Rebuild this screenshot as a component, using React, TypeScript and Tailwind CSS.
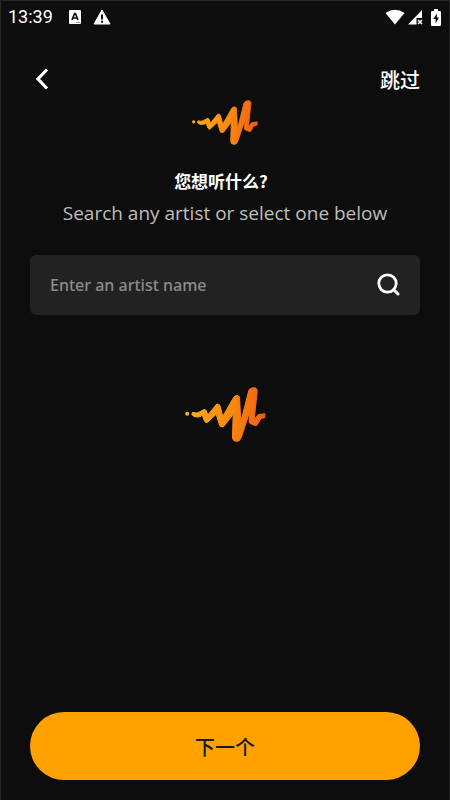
import React from 'react';

const Logo: React.FC<{ id: string; className: string }> = ({ id, className }) => (
  <svg viewBox="45 38 242 165" className={className} aria-hidden="true">
    <defs>
      <linearGradient id={id} x1="45" y1="120" x2="287" y2="140" gradientUnits="userSpaceOnUse">
        <stop offset="0" stopColor="#ffb01c" />
        <stop offset="0.55" stopColor="#fb8a10" />
        <stop offset="1" stopColor="#ee5d14" />
      </linearGradient>
    </defs>
    <circle cx="51" cy="118" r="6" fill={`url(#${id})`} />
    <path
      d="M67 114 Q78 119 90 112 L100 106 Q105 103 108 109 L113 122 L138 91 Q144 86 149 93 L158 126 L191 68 Q201 58 208 68 L212 142 L236 48 Q242 38 256 41 Q262 43 261 52 L252 136 L262 123 Q265 119 271 120 L284 118 L284 130 Q273 130 269 137 L262 151 Q257 156 251 152 L239 147 Q236 144 237 138 L238 114 L214 187 Q209 202 200 201 Q187 201 187 188 L189 120 L162 155 Q155 161 149 155 L138 120 L113 143 Q107 148 103 141 L97 123 Q89 129 80 128 Q67 127 65 120 Z"
      fill={`url(#${id})`}
      stroke={`url(#${id})`}
      strokeWidth="3"
      strokeLinejoin="round"
    />
  </svg>
);

const StatusBar: React.FC = () => (
  <div className="flex h-8 items-center justify-between pl-[7px] pr-2">
    <div className="flex items-center">
      <span className="font-['Roboto'] text-lg">13:39</span>
      <svg viewBox="0 0 12 14" className="ml-4 h-[14px] w-3" aria-hidden="true">
        <rect width="12" height="14" rx="1" fill="#fff" />
        <path d="M3 10 L5.6 3.5 H6.4 L9 10 M4 8 H8" fill="none" stroke="#0d0d0d" strokeWidth="1.6" />
        <path d="M7 12.5 H11" stroke="#999" />
      </svg>
      <svg viewBox="0 0 18 16" className="ml-3 h-4 w-[18px]" aria-hidden="true">
        <path d="M9 1 L17 15 H1 Z" fill="#fff" stroke="#fff" strokeLinejoin="round" />
        <path d="M9 5.5 V10.5 M9 11.8 V13.8" stroke="#0d0d0d" strokeWidth="2" />
      </svg>
    </div>
    <div className="flex items-center">
      <svg viewBox="0 0 20 16" className="h-4 w-5" aria-hidden="true">
        <path d="M0.5 4 Q10 -2.5 19.5 4 L10 15.5 Z" fill="#fff" />
      </svg>
      <svg viewBox="0 0 15 15" className="ml-[3px] h-[15px] w-[15px]" aria-hidden="true">
        <path d="M14 0 V8 H8.5 V14.5 H0 Z" fill="#fff" />
        <path d="M10 10 L14 14 M14 10 L10 14" stroke="#fff" strokeWidth="1.5" />
      </svg>
      <svg viewBox="0 0 10 17" className="ml-2 h-[17px] w-[10px]" aria-hidden="true">
        <path d="M3 0 H7 V2 H9 Q10 2 10 3 V16 Q10 17 9 17 H1 Q0 17 0 16 V3 Q0 2 1 2 H3 Z" fill="#fff" />
        <path d="M6 4.5 L2.2 10 H4.6 V14.5 L8 8.6 H5.8 Z" fill="#0d0d0d" />
      </svg>
    </div>
  </div>
);

const App: React.FC = () => {
  return (
    <div className="flex min-h-screen flex-col border-x border-t border-[#262626] bg-[#0d0d0d] font-['Open_Sans','Noto_Sans_CJK_SC',sans-serif] text-white">
      <StatusBar />

      <header className="mt-7 flex h-9 items-center justify-between px-[29px]">
        <button type="button" aria-label="Back" className="flex h-9 w-6 items-center justify-center">
          <svg viewBox="0 0 14 22" className="h-[22px] w-[14px]" aria-hidden="true">
            <path d="M12 1.5 L3 11 L12 20.5" fill="none" stroke="#fff" strokeWidth="3.2" />
          </svg>
        </button>
        <button type="button" className="pt-0.5 font-['Noto_Sans_CJK_SC',sans-serif] text-xl font-medium">跳过</button>
      </header>

      <main className="flex flex-1 flex-col px-[29px]">
        <Logo id="logo-top" className="mt-[3px] h-[45px] w-[66px] self-center" />
        <h1 className="mt-6 pr-2 text-center font-['Noto_Sans_CJK_SC',sans-serif] text-[17px] leading-6 font-bold">您想听什么?</h1>
        <p className="mt-1 text-center text-[19px] leading-8 text-[#bdbdbd]">Search any artist or select one below</p>

        <form className="mt-[26px] flex h-[60px] items-center rounded-md bg-[#222222] px-5" onSubmit={(e) => e.preventDefault()}>
          <input
            type="text"
            aria-label="Artist name"
            placeholder="Enter an artist name"
            className="min-w-0 flex-1 bg-transparent font-['Noto_Sans',sans-serif] text-base font-medium outline-none placeholder:text-[#8c8c8c]"
          />
          <button type="submit" aria-label="Search">
            <svg viewBox="0 0 24 24" className="h-6 w-6" aria-hidden="true">
              <circle cx="11.5" cy="10.5" r="8.7" fill="none" stroke="#fff" strokeWidth="2.8" />
              <path d="M17.5 16.5 L22 21" stroke="#fff" strokeWidth="3" strokeLinecap="round" />
            </svg>
          </button>
        </form>

        <Logo id="logo-list" className="mt-[72px] h-[55px] w-[81px] self-center" />

        <button
          type="button"
          className="mt-auto mb-5 h-17 w-full rounded-full bg-[#ffa200] pt-0.5 font-['Noto_Sans_CJK_SC',sans-serif] text-xl font-medium text-[#1a1a1a]"
        >
          下一个
        </button>
      </main>
    </div>
  );
};

export default App;
